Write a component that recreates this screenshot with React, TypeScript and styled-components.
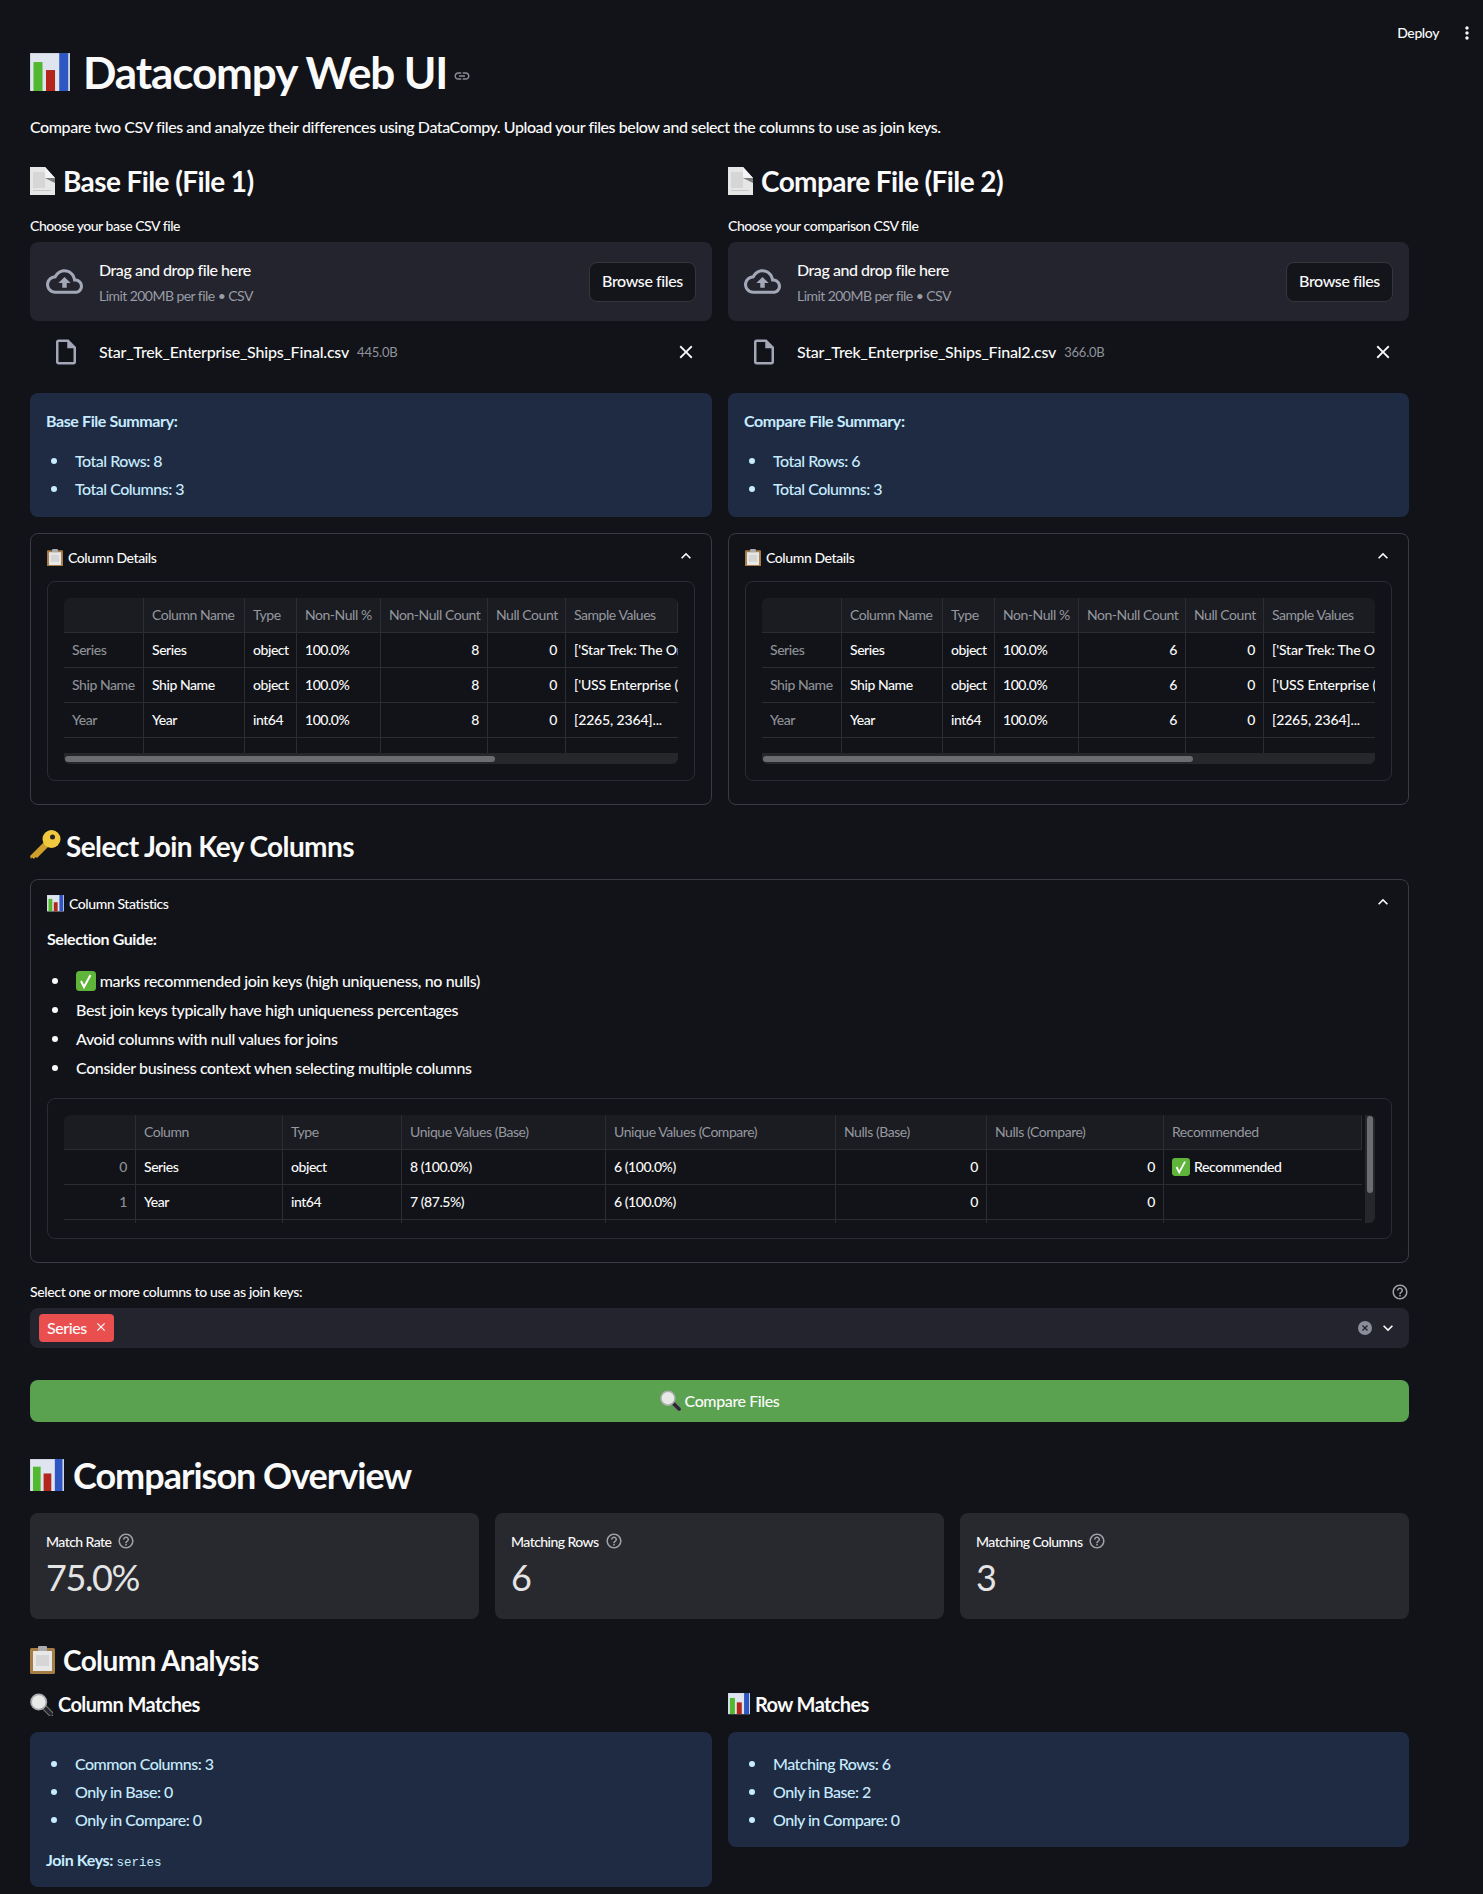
import React from "react";
import styled, { createGlobalStyle } from "styled-components";

const Global = createGlobalStyle`
  html, body { margin: 0; padding: 0; background: #111318; }
  * { box-sizing: border-box; }
  body { font-family: "Lato", "Noto Sans", "Liberation Sans", sans-serif; font-weight: 500; color: #fafafa; font-size: 16px; }
`;

const Page = styled.div`
  min-height: 1894px;
  background: #111318;
  padding: 0 74px 0 30px;
`;
const TopBar = styled.header`
  height: 50px;
  margin-right: -74px;
  padding: 23px 6px 0 0;
  display: flex;
  justify-content: flex-end;
  align-items: flex-start;
  gap: 18px;
`;
const Deploy = styled.span`
  font-size: 14px;
  line-height: 20px;
  letter-spacing: -0.4px;
`;
const Title = styled.h1`
  margin: 0;
  height: 46px;
  padding-bottom: 2px;
  display: flex;
  align-items: center;
  gap: 13px;
  font-size: 44px;
  font-weight: 700;
  letter-spacing: -1.1px;
  line-height: 46px;
`;
const LinkMark = styled.span`
  margin: 8px 0 0 -7px;
  display: flex;
`;
const Lead = styled.p`
  margin: 19px 0 1px;
  line-height: 24px;
  font-size: 16px;
  letter-spacing: -0.425px;
`;
const Columns = styled.div`
  display: grid;
  grid-template-columns: 682px 681px;
  gap: 16px;
  align-items: start;
`;
const Col = styled.div`
  min-width: 0;
`;
const H3 = styled.h3<{ $top: number }>`
  margin: ${(p) => p.$top}px 0 0;
  height: 40px;
  display: flex;
  align-items: center;
  gap: 8px;
  font-size: 28px;
  font-weight: 700;
  letter-spacing: -0.6px;
  line-height: 40px;
`;
const H2 = styled.h2`
  margin: 28px 0 0;
  height: 50px;
  display: flex;
  align-items: center;
  gap: 9px;
  font-size: 36px;
  font-weight: 700;
  letter-spacing: -1px;
`;
const H4 = styled.h4`
  margin: 10px 0 0;
  height: 28px;
  display: flex;
  align-items: center;
  gap: 5px;
  font-size: 20px;
  font-weight: 700;
  letter-spacing: -0.6px;
`;
const Label = styled.div<{ $top: number; $track?: number }>`
  margin-top: ${(p) => p.$top}px;
  height: 20px;
  line-height: 20px;
  font-size: 14px;
  letter-spacing: ${(p) => p.$track ?? -0.45}px;
  display: flex;
  justify-content: space-between;
  align-items: center;
`;
const Dropzone = styled.div`
  margin-top: 6px;
  height: 79px;
  background: #23242d;
  border-radius: 8px;
  padding: 0 16px;
  display: flex;
  align-items: center;
`;
const DropIcon = styled.div`
  width: 53px;
  display: flex;
  align-items: center;
`;
const DropText = styled.div`
  flex: 1;
`;
const DropTitle = styled.div`
  font-size: 16px;
  line-height: 24px;
  letter-spacing: -0.45px;
`;
const DropHint = styled.div`
  margin-top: 4px;
  font-size: 14px;
  line-height: 20px;
  font-weight: 400;
  letter-spacing: -0.55px;
  color: #9a9ca6;
`;
const Browse = styled.button`
  width: 107px;
  height: 40px;
  padding: 0 0 2px;
  background: #13151a;
  color: #fafafa;
  border: 1px solid #34363e;
  border-radius: 8px;
  font: inherit;
  font-size: 16px;
  letter-spacing: -0.4px;
`;
const FileRow = styled.div`
  height: 62px;
  margin-bottom: 10px;
  padding: 0 15px 0 21px;
  display: flex;
  align-items: center;
`;
const FileIconBox = styled.div`
  width: 48px;
  display: flex;
  align-items: center;
`;
const FileName = styled.span`
  font-size: 16px;
  letter-spacing: -0.2px;
  margin-bottom: 2px;
`;
const FileSize = styled.span`
  flex: 1;
  margin-left: 8px;
  font-size: 13px;
  font-weight: 400;
  color: #90929c;
  letter-spacing: -0.2px;
`;
const InfoBox = styled.div<{ $height: number }>`
  height: ${(p) => p.$height}px;
  margin-top: ${(p) => (p.$height === 124 ? 0 : 14)}px;
  background: #1f2b43;
  border-radius: 8px;
  color: #c7ebff;
  padding: 16px;
`;
const InfoTitle = styled.div`
  font-weight: 700;
  line-height: 24px;
  letter-spacing: -0.4px;
`;
const Bullets = styled.ul<{ $top: number; $gap: number; $track?: number }>`
  margin: ${(p) => p.$top}px 0 0;
  padding: 0 0 0 29px;
  list-style: none;
  li {
    position: relative;
    line-height: 24px;
    letter-spacing: ${(p) => p.$track ?? -0.5}px;
  }
  li::before {
    content: "";
    position: absolute;
    left: -24px;
    top: 9px;
    width: 6px;
    height: 6px;
    border-radius: 50%;
    background: currentColor;
  }
  li + li {
    margin-top: ${(p) => p.$gap}px;
  }
`;
const JoinKeys = styled.div`
  margin-top: 16px;
  line-height: 24px;
  font-weight: 700;
  letter-spacing: -0.4px;
  code {
    font-family: "Liberation Mono", monospace;
    font-weight: 400;
    font-size: 12.5px;
    letter-spacing: 0;
  }
`;
const Expander = styled.section<{ $top: number; $height: number }>`
  margin-top: ${(p) => p.$top}px;
  height: ${(p) => p.$height}px;
  border: 1px solid #3a3c43;
  border-radius: 8px;
  padding: 0 16px;
`;
const ExpHead = styled.div`
  height: 47px;
  display: flex;
  align-items: center;
  font-size: 14px;
  letter-spacing: -0.4px;
  gap: 5px;
`;
const ExpTitle = styled.span`
  flex: 1;
`;
const Chevron = styled.div`
  margin: -4px -1px 0 0;
  display: flex;
`;
const GuideTitle = styled.div`
  font-weight: 700;
  line-height: 24px;
  letter-spacing: -0.4px;
`;
const TableCard = styled.div<{ $top?: number; $height: number }>`
  margin-top: ${(p) => p.$top ?? 0}px;
  height: ${(p) => p.$height}px;
  border: 1px solid #2a2c33;
  border-radius: 8px;
  padding: 16px;
`;
const GridRow = styled.div`
  display: flex;
`;
const DataGrid = styled.div<{ $cols: string }>`
  flex: 1;
  min-width: 0;
  display: grid;
  grid-template-columns: ${(p) => p.$cols};
  overflow: hidden;
  border-top-left-radius: 6px;
  border-top-right-radius: 6px;
  font-size: 14px;
  letter-spacing: -0.45px;
`;
const HeadCell = styled.div`
  height: 35px;
  line-height: 34px;
  padding: 0 8px;
  background: #1a1c22;
  color: #96989f;
  font-weight: 400;
  white-space: nowrap;
  overflow: hidden;
  border-right: 1px solid #2b2d33;
  border-bottom: 1px solid #2b2d33;
  &:last-of-type { border-right: none; }
`;
const Cell = styled.div<{ $right?: boolean; $muted?: boolean; $end?: boolean }>`
  height: 35px;
  line-height: 34px;
  padding: 0 8px;
  white-space: nowrap;
  overflow: hidden;
  text-align: ${(p) => (p.$right ? "right" : "left")};
  color: ${(p) => (p.$muted ? "#8e9096" : "#fafafa")};
  border-right: ${(p) => (p.$end ? "none" : "1px solid #2b2d33")};
  border-bottom: 1px solid #2b2d33;
  letter-spacing: ${(p) => (p.$end ? -0.15 : -0.45)}px;
`;
const Filler = styled.div<{ $h: number; $end?: boolean }>`
  height: ${(p) => p.$h}px;
  border-right: ${(p) => (p.$end ? "none" : "1px solid #2b2d33")};
`;
const HTrack = styled.div`
  height: 11px;
  background: #26272a;
  border-radius: 0 0 6px 6px;
  padding: 3px 1px 2px;
`;
const HThumb = styled.div`
  width: 430px;
  height: 6px;
  border-radius: 3px;
  background: #6b6c6f;
`;
const VTrack = styled.div`
  width: 10px;
  height: 108px;
  background: #26272a;
  border-radius: 0 6px 6px 0;
  padding: 1px 2px;
`;
const VThumb = styled.div`
  height: 77px;
  width: 6px;
  border-radius: 3px;
  background: #6b6c6f;
`;
const CheckCell = styled.span`
  display: inline-flex;
  align-items: center;
  gap: 4px;
  height: 34px;
  letter-spacing: -0.4px;
`;
const Select = styled.div`
  margin-top: 6px;
  height: 40px;
  background: #23242d;
  border-radius: 8px;
  padding: 0 11px 0 9px;
  display: flex;
  align-items: center;
  gap: 5px;
`;
const Tag = styled.span`
  width: 75px;
  height: 28px;
  background: #ea4f4f;
  border-radius: 4px;
  padding: 0 6px 2px 8px;
  display: flex;
  align-items: center;
  justify-content: space-between;
  font-size: 16px;
  letter-spacing: -0.4px;
`;
const SelectSpacer = styled.div`
  flex: 1;
`;
const Primary = styled.button`
  margin-top: 32px;
  width: 100%;
  height: 42px;
  padding: 0 0 2px;
  background: #5aa24f;
  border: none;
  border-radius: 8px;
  color: #fafafa;
  font: inherit;
  font-size: 16px;
  letter-spacing: -0.4px;
  display: flex;
  align-items: center;
  justify-content: center;
  gap: 4px;
`;
const Metrics = styled.div`
  margin-top: 13px;
  display: grid;
  grid-template-columns: repeat(3, 1fr);
  gap: 16px;
`;
const Metric = styled.div`
  height: 106px;
  background: #28292f;
  border-radius: 8px;
  padding: 16px;
`;
const MetricLabel = styled.div`
  height: 24px;
  display: flex;
  align-items: center;
  gap: 6px;
  font-size: 14px;
  letter-spacing: -0.55px;
`;
const MetricValue = styled.div`
  margin-top: 1px;
  font-size: 36px;
  font-weight: 400;
  line-height: 46px;
  color: #e4e4e4;
  letter-spacing: -1.4px;
`;
const SvgFlex = styled.svg`
  flex: none;
  display: block;
`;
const KeySvg = styled(SvgFlex)`
  margin-right: -4px;
`;
const InlineSvg = styled.svg`
  display: inline-block;
  vertical-align: -4px;
  flex: none;
`;

const Ic = ({ d, size, color }: { d: string; size: number; color: string }) => (
  <SvgFlex width={size} height={size} viewBox="0 0 24 24" fill={color}>
    <path d={d} />
  </SvgFlex>
);

const P = {
  cloud:
    "M19.35 10.04C18.67 6.59 15.64 4 12 4 9.11 4 6.6 5.64 5.35 8.04 2.34 8.36 0 10.91 0 14c0 3.31 2.69 6 6 6h13c2.76 0 5-2.24 5-5 0-2.64-2.05-4.78-4.65-4.96zM19 18H6c-2.21 0-4-1.79-4-4 0-2.05 1.53-3.76 3.56-3.97l1.07-.11.5-.95C8.08 7.14 9.94 6 12 6c2.62 0 4.88 1.86 5.39 4.43l.3 1.5 1.53.11c1.56.1 2.78 1.41 2.78 2.96 0 1.65-1.35 3-3 3zM8 13h2.55v3h2.9v-3H16l-4-4z",
  file: "M14 2H6c-1.1 0-1.99.9-1.99 2L4 20c0 1.1.89 2 1.99 2H18c1.1 0 2-.9 2-2V8l-6-6zM6 20V4h7v5h5v11H6z",
  x: "M19 6.41L17.59 5 12 10.59 6.41 5 5 6.41 10.59 12 5 17.59 6.41 19 12 13.41 17.59 19 19 17.59 13.41 12z",
  up: "M12 8l-6 6 1.41 1.41L12 10.83l4.59 4.58L18 14z",
  down: "M16.59 8.59L12 13.17 7.41 8.59 6 10l6 6 6-6z",
  help: "M11 18h2v-2h-2v2zm1-16C6.48 2 2 6.48 2 12s4.48 10 10 10 10-4.48 10-10S17.52 2 12 2zm0 18c-4.41 0-8-3.59-8-8s3.59-8 8-8 8 3.59 8 8-3.59 8-8 8zm0-14c-2.21 0-4 1.79-4 4h2c0-1.1.9-2 2-2s2 .9 2 2c0 2-3 1.75-3 5h2c0-2.25 3-2.5 3-5 0-2.21-1.79-4-4-4z",
  link: "M3.9 12c0-1.71 1.39-3.1 3.1-3.1h4V7H7c-2.76 0-5 2.24-5 5s2.24 5 5 5h4v-1.9H7c-1.71 0-3.1-1.39-3.1-3.1zM8 13h8v-2H8v2zm9-6h-4v1.9h4c1.71 0 3.1 1.39 3.1 3.1s-1.39 3.1-3.1 3.1h-4V17h4c2.76 0 5-2.24 5-5s-2.24-5-5-5z",
  dots: "M12 8c1.1 0 2-.9 2-2s-.9-2-2-2-2 .9-2 2 .9 2 2 2zm0 2c-1.1 0-2 .9-2 2s.9 2 2 2 2-.9 2-2-.9-2-2-2zm0 6c-1.1 0-2 .9-2 2s.9 2 2 2 2-.9 2-2-.9-2-2-2z",
};

const BarEmoji = ({ w }: { w: number }) => (
  <SvgFlex width={w} height={(w * 110) / 115} viewBox="0 0 115 110">
    <rect width="115" height="110" fill="#dfe5ee" />
    <rect x="0" y="0" width="115" height="110" fill="none" stroke="#aab2bd" strokeWidth="2" />
    <rect x="10" y="26" width="26" height="84" fill="#52b82f" />
    <rect x="46" y="49" width="26" height="61" fill="#b3261b" />
    <rect x="84" y="0" width="26" height="110" fill="#2f57c4" />
  </SvgFlex>
);
const PageEmoji = ({ w }: { w: number }) => (
  <SvgFlex width={w} height={(w * 28) / 25} viewBox="0 0 25 28">
    <path d="M0 0H15L25 11V28H0Z" fill="#e6e6e6" />
    <rect x="3" y="5" width="12" height="16" fill="#d6d6d6" />
    <rect x="3" y="23" width="18" height="1" fill="#c8c8c8" />
    <path d="M15 11H25V16Z" fill="#7d7d7d" />
    <path d="M15 0L25 11H17Q15 11 15 9Z" fill="#f4f4f4" />
  </SvgFlex>
);
const ClipEmoji = ({ w }: { w: number }) => (
  <SvgFlex width={w} height={(w * 28) / 25} viewBox="0 0 25 28">
    <rect x="0" y="2" width="25" height="26" rx="1.5" fill="#a67c45" />
    <rect x="3" y="5" width="19" height="20" fill="#e8e8e8" />
    <rect x="6" y="9" width="13" height="11" fill="#d6d6d6" />
    <rect x="8" y="0" width="9" height="5" rx="1" fill="#a9abae" />
  </SvgFlex>
);
const KeyEmoji = ({ w }: { w: number }) => (
  <KeySvg width={w} height={w} viewBox="4 4 32 32">
    <path d="M19 15L23 20L11 32L9.5 31L8 33L6 31.5L5 33L4 30Z" fill="#cf9f2c" />
    <circle cx="25.5" cy="13" r="9" fill="#f0c93f" />
    <circle cx="26.5" cy="11" r="2.5" fill="#2a2420" />
  </KeySvg>
);
const LensEmoji = ({ w }: { w: number }) => (
  <SvgFlex width={w} height={w} viewBox="0 0 23 23">
    <path d="M14 14L21 21" stroke="#777a7d" strokeWidth="5.5" strokeLinecap="round" />
    <path d="M14 14L21 21" stroke="#25272a" strokeWidth="3.5" strokeLinecap="round" />
    <circle cx="8.7" cy="9" r="8.5" fill="#a9abad" />
    <circle cx="8.7" cy="9" r="6.8" fill="#e6e9e6" />
  </SvgFlex>
);
const CheckEmoji = ({ w }: { w: number }) => (
  <InlineSvg width={w} height={w} viewBox="0 0 20 20">
    <rect width="20" height="20" rx="3.5" fill="#5fb53a" />
    <path d="M5 10l3 6 6.5-12" fill="none" stroke="#fff" strokeWidth="2" />
  </InlineSvg>
);

const cols1 = "80px 101px 52px 84px 107px 78px 112px";
const rows1 = (n: string) => [
  ["Series", "Series", "object", "100.0%", n, "0", "['Star Trek: The Original Series'"],
  ["Ship Name", "Ship Name", "object", "100.0%", n, "0", "['USS Enterprise (NCC-1701)'"],
  ["Year", "Year", "int64", "100.0%", n, "0", "[2265, 2364]..."],
];
const head1 = ["", "Column Name", "Type", "Non-Null %", "Non-Null Count", "Null Count", "Sample Values"];

const ColumnDetails = ({ n }: { n: string }) => (
  <Expander $top={16} $height={272}>
    <ExpHead>
      <ClipEmoji w={16} />
      <ExpTitle>Column Details</ExpTitle>
      <Chevron>
        <Ic d={P.up} size={20} color="#fafafa" />
      </Chevron>
    </ExpHead>
    <TableCard $height={200}>
      <DataGrid $cols={cols1}>
        {head1.map((h, i) => (
          <HeadCell key={i}>{h}</HeadCell>
        ))}
        {rows1(n).map((r) =>
          r.map((c, i) => (
            <Cell key={r[0] + i} $muted={i === 0} $right={i === 4 || i === 5} $end={i === 6}>
              {c}
            </Cell>
          )),
        )}
        {head1.map((_, i) => (
          <Filler key={i} $h={15} $end={i === 6} />
        ))}
      </DataGrid>
      <HTrack>
        <HThumb />
      </HTrack>
    </TableCard>
  </Expander>
);

const Upload = ({ label, file, size, top }: { label: string; file: string; size: string; top: number }) => (
  <>
    <Label $top={top}>{label}</Label>
    <Dropzone>
      <DropIcon>
        <Ic d={P.cloud} size={37} color="#a3a8b8" />
      </DropIcon>
      <DropText>
        <DropTitle>Drag and drop file here</DropTitle>
        <DropHint>Limit 200MB per file • CSV</DropHint>
      </DropText>
      <Browse>Browse files</Browse>
    </Dropzone>
    <FileRow>
      <FileIconBox>
        <Ic d={P.file} size={30} color="#a3a8b8" />
      </FileIconBox>
      <FileName>{file}</FileName>
      <FileSize>{size}</FileSize>
      <Ic d={P.x} size={22} color="#fafafa" />
    </FileRow>
  </>
);

const cols2 = "72px 147px 119px 204px 230px 151px 177px 198px";
const head2 = ["", "Column", "Type", "Unique Values (Base)", "Unique Values (Compare)", "Nulls (Base)", "Nulls (Compare)", "Recommended"];

export default function App() {
  return (
    <Page>
      <Global />
      <TopBar>
        <Deploy>Deploy</Deploy>
        <Ic d={P.dots} size={20} color="#fafafa" />
      </TopBar>
      <Title>
        <BarEmoji w={40} />
        Datacompy Web UI
        <LinkMark>
          <Ic d={P.link} size={18} color="#8a8d94" />
        </LinkMark>
      </Title>
      <Lead>Compare two CSV files and analyze their differences using DataCompy. Upload your files below and select the columns to use as join keys.</Lead>
      <Columns>
        <Col>
          <H3 $top={21}>
            <PageEmoji w={25} />
            Base File (File 1)
          </H3>
          <Upload top={15} label="Choose your base CSV file" file="Star_Trek_Enterprise_Ships_Final.csv" size="445.0B" />
          <InfoBox $height={124}>
            <InfoTitle>Base File Summary:</InfoTitle>
            <Bullets $top={16} $gap={4}>
              <li>Total Rows: 8</li>
              <li>Total Columns: 3</li>
            </Bullets>
          </InfoBox>
          <ColumnDetails n="8" />
        </Col>
        <Col>
          <H3 $top={21}>
            <PageEmoji w={25} />
            Compare File (File 2)
          </H3>
          <Upload top={15} label="Choose your comparison CSV file" file="Star_Trek_Enterprise_Ships_Final2.csv" size="366.0B" />
          <InfoBox $height={124}>
            <InfoTitle>Compare File Summary:</InfoTitle>
            <Bullets $top={16} $gap={4}>
              <li>Total Rows: 6</li>
              <li>Total Columns: 3</li>
            </Bullets>
          </InfoBox>
          <ColumnDetails n="6" />
        </Col>
      </Columns>
      <H3 $top={21}>
        <KeyEmoji w={32} />
        Select Join Key Columns
      </H3>
      <Expander $top={13} $height={384}>
        <ExpHead>
          <BarEmoji w={17} />
          <ExpTitle>Column Statistics</ExpTitle>
          <Chevron>
            <Ic d={P.up} size={20} color="#fafafa" />
          </Chevron>
        </ExpHead>
        <GuideTitle>Selection Guide:</GuideTitle>
        <Bullets $top={18} $gap={5} $track={-0.37}>
          <li>
            <CheckEmoji w={20} /> marks recommended join keys (high uniqueness, no nulls)
          </li>
          <li>Best join keys typically have high uniqueness percentages</li>
          <li>Avoid columns with null values for joins</li>
          <li>Consider business context when selecting multiple columns</li>
        </Bullets>
        <TableCard $top={18} $height={141}>
          <GridRow>
            <DataGrid $cols={cols2}>
              {head2.map((h, i) => (
                <HeadCell key={i}>{h}</HeadCell>
              ))}
              <Cell $right $muted>0</Cell>
              <Cell>Series</Cell>
              <Cell>object</Cell>
              <Cell>8 (100.0%)</Cell>
              <Cell>6 (100.0%)</Cell>
              <Cell $right>0</Cell>
              <Cell $right>0</Cell>
              <Cell $end>
                <CheckCell>
                  <CheckEmoji w={18} /> Recommended
                </CheckCell>
              </Cell>
              <Cell $right $muted>1</Cell>
              <Cell>Year</Cell>
              <Cell>int64</Cell>
              <Cell>7 (87.5%)</Cell>
              <Cell>6 (100.0%)</Cell>
              <Cell $right>0</Cell>
              <Cell $right>0</Cell>
              <Cell $end />
              {head2.map((_, i) => (
                <Filler key={i} $h={3} $end={i === 7} />
              ))}
            </DataGrid>
            <VTrack>
              <VThumb />
            </VTrack>
          </GridRow>
        </TableCard>
      </Expander>
      <Label $top={19} $track={-0.36}>
        Select one or more columns to use as join keys:
        <Ic d={P.help} size={18} color="#a0a2a8" />
      </Label>
      <Select>
        <Tag>
          Series
          <Ic d={P.x} size={14} color="#fafafa" />
        </Tag>
        <SelectSpacer />
        <SvgFlex width="16" height="16" viewBox="0 0 16 16">
          <circle cx="8" cy="8" r="7" fill="#8a8d9c" />
          <path d="M5.5 5.5l5 5M10.5 5.5l-5 5" stroke="#23242d" strokeWidth="1.4" />
        </SvgFlex>
        <Ic d={P.down} size={20} color="#fafafa" />
      </Select>
      <Primary>
        <LensEmoji w={21} />
        Compare Files
      </Primary>
      <H2>
        <BarEmoji w={34} />
        Comparison Overview
      </H2>
      <Metrics>
        {[
          ["Match Rate", "75.0%"],
          ["Matching Rows", "6"],
          ["Matching Columns", "3"],
        ].map(([l, v]) => (
          <Metric key={l}>
            <MetricLabel>
              {l}
              <Ic d={P.help} size={18} color="#a0a2a8" />
            </MetricLabel>
            <MetricValue>{v}</MetricValue>
          </Metric>
        ))}
      </Metrics>
      <H3 $top={21}>
        <ClipEmoji w={25} />
        Column Analysis
      </H3>
      <Columns>
        <Col>
          <H4>
            <LensEmoji w={23} />
            Column Matches
          </H4>
          <InfoBox $height={155}>
            <Bullets $top={4} $gap={4}>
              <li>Common Columns: 3</li>
              <li>Only in Base: 0</li>
              <li>Only in Compare: 0</li>
            </Bullets>
            <JoinKeys>
              Join Keys: <code>series</code>
            </JoinKeys>
          </InfoBox>
        </Col>
        <Col>
          <H4>
            <BarEmoji w={22} />
            Row Matches
          </H4>
          <InfoBox $height={115}>
            <Bullets $top={4} $gap={4}>
              <li>Matching Rows: 6</li>
              <li>Only in Base: 2</li>
              <li>Only in Compare: 0</li>
            </Bullets>
          </InfoBox>
        </Col>
      </Columns>
    </Page>
  );
}
